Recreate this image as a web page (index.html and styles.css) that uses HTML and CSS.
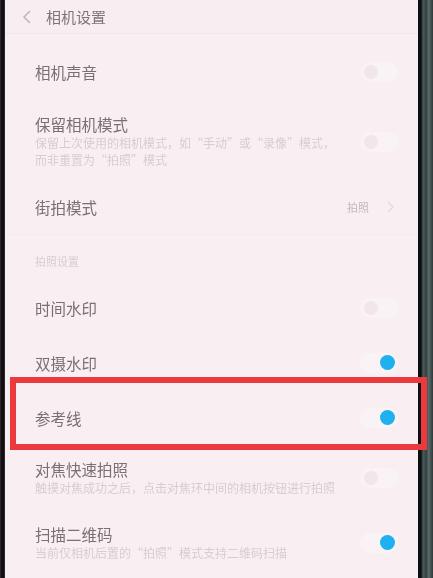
FILE: index.html
```html
<!DOCTYPE html>
<html lang="zh-CN">
<head>
    <meta charset="UTF-8">
    <meta name="viewport" content="width=device-width, initial-scale=1.0">
    <title>相机设置</title>
    <link rel="stylesheet" href="styles.css">
</head>
<body>
    <div class="device">
        <div class="bezel-left"></div>
        <div class="screen">
            <div class="topbar">
                <svg class="back" width="10" height="14" viewBox="0 0 10 14">
                    <polyline points="8,1 2,7 8,13" fill="none" stroke="#bdb5b9" stroke-width="1.5"/>
                </svg>
                <span class="topbar-title">相机设置</span>
            </div>

            <div class="settings">
                <div class="row">
                    <div class="label"><div class="title">相机声音</div></div>
                    <div class="toggle"><span class="knob"></span></div>
                </div>
                <div class="row row-tall">
                    <div class="label">
                        <div class="title">保留相机模式</div>
                        <div class="sub">保留上次使用的相机模式，如“手动”或“录像”模式，<br>而非重置为“拍照”模式</div>
                    </div>
                    <div class="toggle"><span class="knob"></span></div>
                </div>
                <div class="row">
                    <div class="label"><div class="title">街拍模式</div></div>
                    <div class="value">拍照</div>
                    <svg class="chevron" width="8" height="12" viewBox="0 0 8 12">
                        <polyline points="2,1 7,6 2,11" fill="none" stroke="#e2dadd" stroke-width="1.4"/>
                    </svg>
                </div>
                <div class="section">拍照设置</div>
                <div class="row">
                    <div class="label"><div class="title">时间水印</div></div>
                    <div class="toggle"><span class="knob"></span></div>
                </div>
                <div class="row">
                    <div class="label"><div class="title">双摄水印</div></div>
                    <div class="toggle on"><span class="knob"></span></div>
                </div>
                <div class="row">
                    <div class="label"><div class="title">参考线</div></div>
                    <div class="toggle on"><span class="knob"></span></div>
                </div>
                <div class="row row-double">
                    <div class="label">
                        <div class="title">对焦快速拍照</div>
                        <div class="sub">触摸对焦成功之后，点击对焦环中间的相机按钮进行拍照</div>
                    </div>
                    <div class="toggle"><span class="knob"></span></div>
                </div>
                <div class="row row-double">
                    <div class="label">
                        <div class="title">扫描二维码</div>
                        <div class="sub">当前仅相机后置的“拍照”模式支持二维码扫描</div>
                    </div>
                    <div class="toggle on"><span class="knob"></span></div>
                </div>
            </div>
        </div>
        <div class="bezel-right"></div>
    </div>
    <div class="highlight"></div>
</body>
</html>
```

FILE: styles.css
```css
body {
    margin: 0;
    width: 433px;
    height: 578px;
    overflow: hidden;
    position: relative;
    font-family: 'Noto Sans CJK SC', 'Noto Sans', sans-serif;
    background-color: #2c3636;
}
.device {
    display: flex;
    height: 578px;
}
.bezel-left {
    width: 5px;
    background: linear-gradient(to right, #3a3238 0, #141216 30%, #0e0d10 80%, #4a4248 100%);
}
.bezel-right {
    width: 15px;
    background: linear-gradient(to right, #0d1012 0, #0d1012 20%, #4c5c5b 35%, #33403f 55%, #5b6b69 70%, #2e3a3a 100%);
}
.screen {
    flex: 1;
    background-color: #f9eff3;
    display: flex;
    flex-direction: column;
    filter: blur(0.4px);
}
.topbar {
    height: 33px;
    display: flex;
    align-items: center;
    padding-left: 17px;
    gap: 14px;
    border-bottom: 1px solid #f2e7ec;
    background-color: #f8edf1;
}
.topbar-title {
    font-size: 15px;
    color: #7c777b;
}
.settings {
    padding-top: 10px;
}
.row {
    height: 55px;
    display: flex;
    align-items: center;
    padding: 0 20px 0 30px;
}
.row-tall {
    height: 80px;
    box-sizing: border-box;
    padding-top: 5px;
}
.row-double {
    height: 65px;
}
.label {
    flex: 1;
}
.title {
    font-size: 15.5px;
    line-height: 18px;
    color: #777175;
}
.sub {
    font-size: 12px;
    line-height: 17px;
    color: #d6cdd2;
    margin-top: 1px;
}
.value {
    font-size: 11px;
    color: #c2babe;
    margin-right: 17px;
}
.chevron {
    margin-right: 4px;
}
.section {
    height: 46px;
    box-sizing: border-box;
    padding: 18px 0 0 30px;
    font-size: 11px;
    color: #d6ced2;
    border-top: 1px solid #f5ebef;
}
.toggle {
    width: 38px;
    height: 20px;
    border-radius: 10px;
    background-color: #faf3f6;
    position: relative;
}
.knob {
    position: absolute;
    top: 3px;
    left: 4px;
    width: 14px;
    height: 14px;
    border-radius: 50%;
    background-color: #f1e7eb;
}
.toggle.on .knob {
    left: 20px;
    top: 2px;
    width: 15px;
    height: 15px;
    background-color: #1fb0f0;
}
.highlight {
    position: absolute;
    left: 10px;
    top: 377px;
    width: 405px;
    height: 61px;
    border: 6px solid #ea3a3d;
}
```
